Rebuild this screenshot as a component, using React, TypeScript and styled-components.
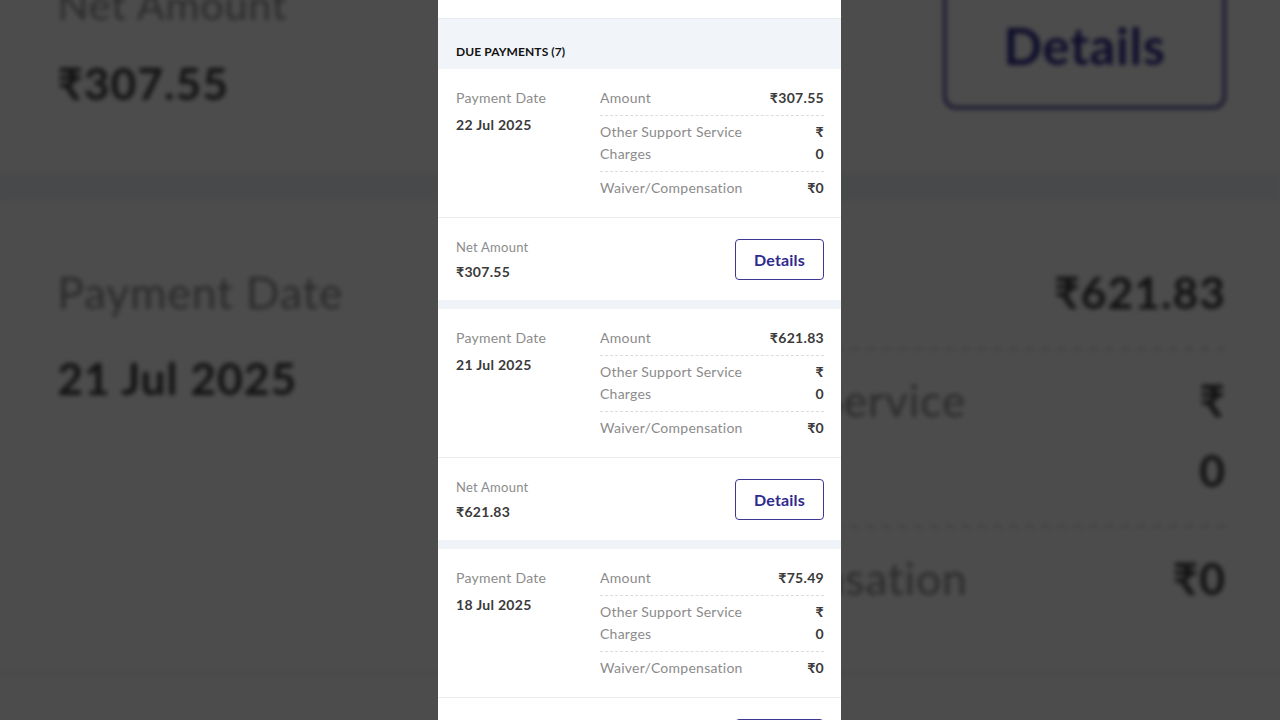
import React from 'react';
import styled, { createGlobalStyle } from 'styled-components';

const GlobalStyle = createGlobalStyle`
  html, body {
    margin: 0;
    padding: 0;
  }
  body {
    font-family: Lato, "Noto Sans", "DejaVu Sans", sans-serif;
    background: #4b4b4b;
  }
`;

type Payment = {
  date: string;
  amount: string;
  other: string;
  waiver: string;
  net: string;
};

const payments: Payment[] = [
  { date: '22 Jul 2025', amount: '₹307.55', other: '₹ 0', waiver: '₹0', net: '₹307.55' },
  { date: '21 Jul 2025', amount: '₹621.83', other: '₹ 0', waiver: '₹0', net: '₹621.83' },
  { date: '18 Jul 2025', amount: '₹75.49', other: '₹ 0', waiver: '₹0', net: '₹75.49' },
];

const Stage = styled.div`
  position: relative;
  width: 1280px;
  height: 720px;
  overflow: hidden;
  background: #4b4b4b;
  padding-left: 438px;
  box-sizing: border-box;
`;

// blown-up, dimmed copy of the sheet behind the phone frame
const Backdrop = styled.div`
  position: absolute;
  top: 0;
  left: 0;
  width: 403px;
  transform-origin: 0 0;
  transform: translateY(-780px) scale(3.176);
  filter: blur(0.8px) brightness(0.3);
  pointer-events: none;
`;

const Phone = styled.div`
  position: relative;
  z-index: 1;
  width: 403px;
  height: 720px;
  overflow: hidden;
  background: #fff;
`;

const Sheet = styled.div`
  width: 403px;
  background: #f0f3f7;
`;

const TopStrip = styled.div`
  height: 18px;
  background: #fff;
  border-bottom: 1px solid #e7ebf1;
`;

const SectionHeader = styled.h2`
  margin: 0;
  height: 50px;
  box-sizing: border-box;
  padding: 26px 18px 0;
  background: #f1f4f9;
  font-size: 12px;
  line-height: 14px;
  font-weight: 700;
  letter-spacing: 0.1px;
  text-transform: uppercase;
  color: #121212;
`;

const Card = styled.section`
  background: #fff;
  margin-bottom: 9px;
`;

const Summary = styled.div`
  display: flex;
  padding: 13px 17px 12px 18px;
  border-bottom: 1px solid #ececec;
`;

const DateCol = styled.div`
  flex: none;
  width: 144px;
  padding-top: 5px;
`;

const Label = styled.div<{ $size?: number }>`
  font-size: ${p => p.$size ?? 14}px;
  line-height: 22px;
  letter-spacing: 0.25px;
  color: #8b8b8b;
`;

const Strong = styled.div<{ $gap?: number }>`
  margin-top: ${p => p.$gap ?? 0}px;
  font-size: 14px;
  line-height: 22px;
  font-weight: 700;
  letter-spacing: 0.3px;
  color: #3a3a3a;
`;

const Breakdown = styled.div`
  flex: 1;
`;

const Line = styled.div`
  display: flex;
  justify-content: space-between;
  align-items: flex-start;
  padding: 5px 0 6px;
  border-bottom: 1px dashed #dcdcdc;
  &:last-child {
    border-bottom: none;
  }
`;

const LineLabel = styled(Label)`
  max-width: 160px;
`;

const LineValue = styled(Strong)<{ $wrap?: boolean }>`
  text-align: right;
  width: ${p => (p.$wrap ? 'min-content' : 'auto')};
`;

const Footer = styled.div`
  display: flex;
  align-items: center;
  justify-content: space-between;
  height: 82px;
  box-sizing: border-box;
  padding: 0 17px 0 18px;
`;

const DetailsButton = styled.button`
  width: 89px;
  height: 41px;
  border: 1px solid #3f3994;
  border-radius: 4px;
  background: #fff;
  color: #2e2a8e;
  font-family: inherit;
  font-size: 16px;
  font-weight: 700;
  letter-spacing: 0.2px;
  cursor: pointer;
`;

function PaymentCard({ date, amount, other, waiver, net }: Payment) {
  return (
    <Card>
      <Summary>
        <DateCol>
          <Label>Payment Date</Label>
          <Strong $gap={5}>{date}</Strong>
        </DateCol>
        <Breakdown>
          <Line>
            <LineLabel>Amount</LineLabel>
            <LineValue>{amount}</LineValue>
          </Line>
          <Line>
            <LineLabel>Other Support Service Charges</LineLabel>
            <LineValue $wrap>{other}</LineValue>
          </Line>
          <Line>
            <LineLabel>Waiver/Compensation</LineLabel>
            <LineValue>{waiver}</LineValue>
          </Line>
        </Breakdown>
      </Summary>
      <Footer>
        <div>
          <Label $size={13}>Net Amount</Label>
          <Strong $gap={3}>{net}</Strong>
        </div>
        <DetailsButton>Details</DetailsButton>
      </Footer>
    </Card>
  );
}

function Statement() {
  return (
    <Sheet>
      <TopStrip />
      <SectionHeader>Due Payments (7)</SectionHeader>
      {payments.map(p => (
        <PaymentCard key={p.date} {...p} />
      ))}
    </Sheet>
  );
}

export default function App() {
  return (
    <Stage>
      <GlobalStyle />
      <Backdrop aria-hidden>
        <Statement />
      </Backdrop>
      <Phone>
        <Statement />
      </Phone>
    </Stage>
  );
}
